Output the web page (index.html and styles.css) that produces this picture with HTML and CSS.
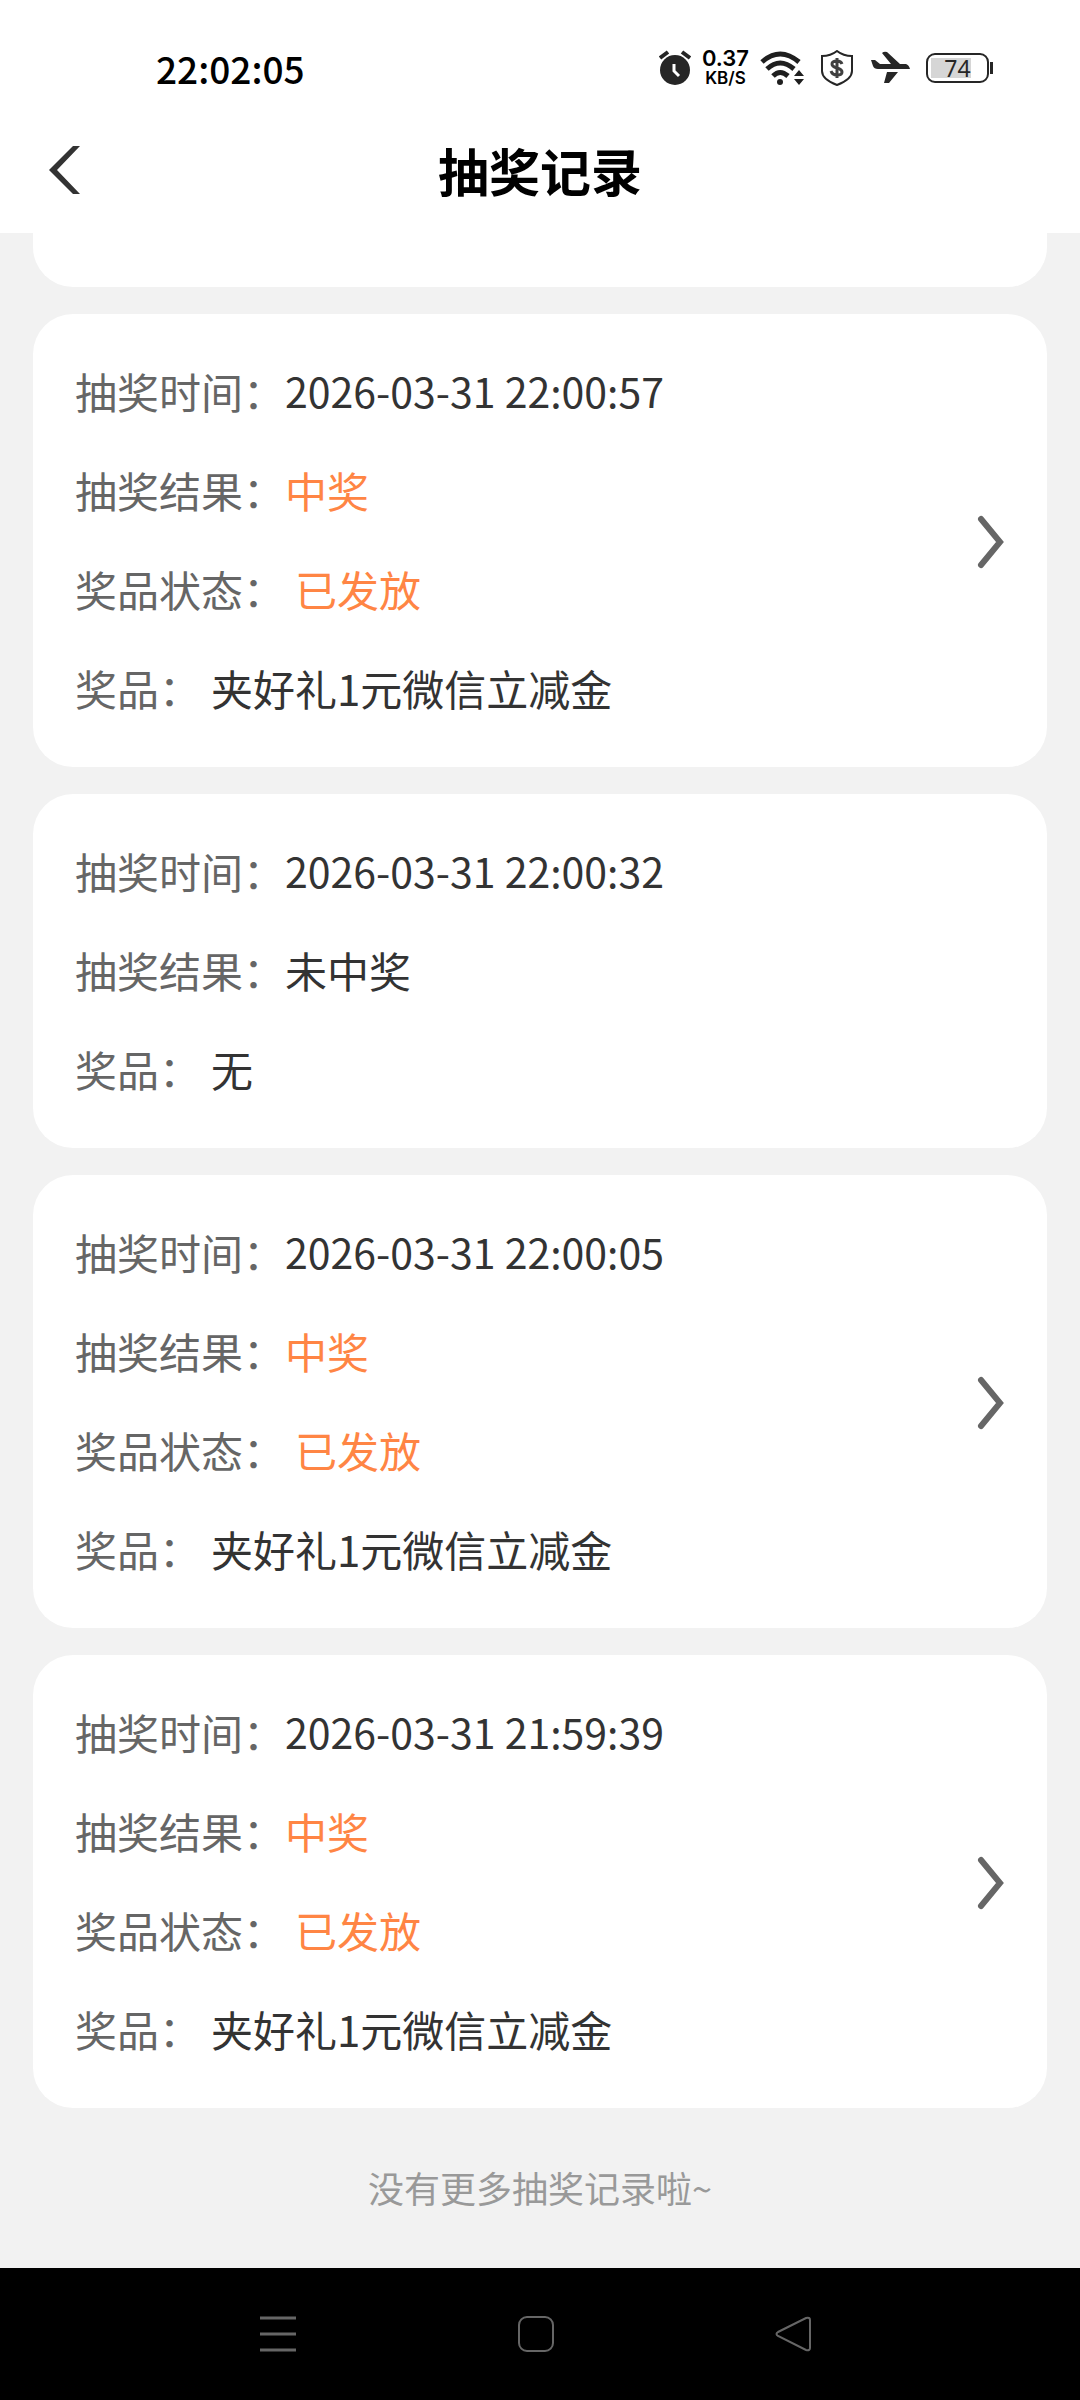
FILE: index.html
```html
<!DOCTYPE html>
<html lang="zh-CN">
<head>
<meta charset="utf-8">
<meta name="viewport" content="width=device-width, initial-scale=1">
<title>抽奖记录</title>
<link rel="stylesheet" href="styles.css">
</head>
<body>
<svg class="sprite" aria-hidden="true">
  <symbol id="chevron" viewBox="0 0 32 56">
    <path d="M7 6 26 29 7 52" fill="none" stroke="currentColor" stroke-width="6" stroke-linecap="round" stroke-linejoin="miter"/>
  </symbol>
</svg>

<div class="status">
  <time class="clock">22:02:05</time>
  <div class="indicators">
    <svg width="32" height="36" viewBox="0 0 32 36" aria-label="闹钟">
      <circle cx="16" cy="20" r="15" fill="#262626"/>
      <path d="M1 8 9 2M23 2l8 6" stroke="#262626" stroke-width="4" fill="none"/>
      <path d="M15 14v7l5 5" stroke="#fff" stroke-width="3" fill="none"/>
    </svg>
    <div class="speed"><span class="rate">0.37</span><span class="unit">KB/S</span></div>
    <svg width="44" height="36" viewBox="0 0 44 36" aria-label="无线网络">
      <g fill="none" stroke="#1f1f1f" stroke-width="5">
        <path d="M2 12Q20-4 39 12"/>
        <path d="M7 19Q20 7 34 19"/>
        <path d="M13 26Q20 19 28 26"/>
      </g>
      <circle cx="20" cy="32" r="3" fill="#1f1f1f"/>
      <path d="M34 26l5-6 5 6zM34 29h10l-5 6z" fill="#1f1f1f"/>
    </svg>
    <svg width="34" height="36" viewBox="0 0 34 36" aria-label="支付保护">
      <path d="M17 1C12 5 7 6 2 6v15c0 7 7 11 15 14 8-3 15-7 15-14V6C27 6 22 5 17 1z" fill="none" stroke="#262626" stroke-width="2"/>
      <path d="M22 14c-1-3-3-3-5-3-3 0-5 1-5 3 0 5 10 3 10 8 0 2-2 3-5 3s-5-1-6-4M17 8v20" fill="none" stroke="#404040" stroke-width="3"/>
    </svg>
    <svg width="40" height="34" viewBox="0 0 40 34" aria-label="飞行模式">
      <path d="M1 9h4l5 4h11L12 2q2-2 5-1l13 12h6q3 1 4 5H8q-4 0-5-3zM17 21h11L19 32h-5z" fill="#262626"/>
    </svg>
    <div class="battery"><span class="level">74</span></div>
  </div>
</div>

<header class="bar">
  <button class="back" type="button" aria-label="返回">
    <svg width="34" height="50" viewBox="0 0 34 50"><path d="M26 1h7L10 25l23 24h-7L2 25z" fill="#333"/></svg>
  </button>
  <h1 class="title">抽奖记录</h1>
</header>

<main class="records">
  <div class="card card-end"></div>

  <article class="card">
    <dl class="fields">
      <div class="row"><dt>抽奖时间：</dt><dd class="when">2026-03-31 22:00:57</dd></div>
      <div class="row"><dt>抽奖结果：</dt><dd class="won">中奖</dd></div>
      <div class="row spaced"><dt>奖品状态：</dt><dd class="won">已发放</dd></div>
      <div class="row spaced"><dt>奖品：</dt><dd>夹好礼1元微信立减金</dd></div>
    </dl>
    <a class="more" href="#" aria-label="查看详情"><svg width="32" height="56"><use href="#chevron"/></svg></a>
  </article>

  <article class="card">
    <dl class="fields">
      <div class="row"><dt>抽奖时间：</dt><dd class="when">2026-03-31 22:00:32</dd></div>
      <div class="row"><dt>抽奖结果：</dt><dd>未中奖</dd></div>
      <div class="row spaced"><dt>奖品：</dt><dd>无</dd></div>
    </dl>
  </article>

  <article class="card">
    <dl class="fields">
      <div class="row"><dt>抽奖时间：</dt><dd class="when">2026-03-31 22:00:05</dd></div>
      <div class="row"><dt>抽奖结果：</dt><dd class="won">中奖</dd></div>
      <div class="row spaced"><dt>奖品状态：</dt><dd class="won">已发放</dd></div>
      <div class="row spaced"><dt>奖品：</dt><dd>夹好礼1元微信立减金</dd></div>
    </dl>
    <a class="more" href="#" aria-label="查看详情"><svg width="32" height="56"><use href="#chevron"/></svg></a>
  </article>

  <article class="card">
    <dl class="fields">
      <div class="row"><dt>抽奖时间：</dt><dd class="when">2026-03-31 21:59:39</dd></div>
      <div class="row"><dt>抽奖结果：</dt><dd class="won">中奖</dd></div>
      <div class="row spaced"><dt>奖品状态：</dt><dd class="won">已发放</dd></div>
      <div class="row spaced"><dt>奖品：</dt><dd>夹好礼1元微信立减金</dd></div>
    </dl>
    <a class="more" href="#" aria-label="查看详情"><svg width="32" height="56"><use href="#chevron"/></svg></a>
  </article>
</main>

<p class="end">没有更多抽奖记录啦~</p>

<nav class="system">
  <button type="button" aria-label="最近任务">
    <svg width="40" height="40" viewBox="0 0 40 40"><path d="M2 4h36M2 20h36M2 36h36" stroke="#666" stroke-width="3"/></svg>
  </button>
  <button type="button" aria-label="主屏幕">
    <svg width="40" height="40" viewBox="0 0 40 40"><rect x="3" y="3" width="34" height="34" rx="8" fill="none" stroke="#666" stroke-width="2"/></svg>
  </button>
  <button type="button" aria-label="返回">
    <svg width="40" height="40" viewBox="0 0 40 40"><path d="M4 18 32 4q4-1 4 2v28q0 3-4 2L4 22q-3-2 0-4z" fill="none" stroke="#666" stroke-width="2"/></svg>
  </button>
</nav>
</body>
</html>
```
FILE: styles.css
```css
* {
  box-sizing: border-box;
}

body {
  display: flex;
  flex-direction: column;
  min-height: 100vh;
  margin: 0;
  background: #f2f2f2;
  color: #333;
  font-family: "Noto Sans CJK SC", sans-serif;
  font-size: 42px;
}

button {
  display: flex;
  align-items: center;
  justify-content: center;
  padding: 0;
  border: 0;
  background: none;
}

svg {
  display: block;
  flex: none;
}

.sprite {
  position: absolute;
  width: 0;
  height: 0;
}

/* System status bar */
.status {
  display: flex;
  align-items: center;
  justify-content: space-between;
  padding: 28px 87px 0 156px;
  background: #fff;
  color: #000;
}

.clock {
  font-size: 37px;
  font-weight: 500;
  line-height: 80px;
}

.indicators {
  display: flex;
  align-items: center;
  gap: 16px;
}

.speed {
  display: flex;
  flex-direction: column;
  align-items: center;
  margin: 0 -5px;
  font-family: Inter, sans-serif;
  font-weight: 600;
}

.rate {
  font-size: 22px;
  line-height: 20px;
}

.unit {
  font-size: 17px;
  line-height: 20px;
}

.battery {
  display: flex;
  align-items: center;
}

.battery::after {
  width: 3px;
  height: 12px;
  margin-left: 1px;
  background: #262626;
  content: "";
}

.level {
  width: 63px;
  border: 2px solid #262626;
  border-radius: 9px;
  background: linear-gradient(#d6d6d6, #d6d6d6) 3px 3px / 40px 20px no-repeat;
  color: #262626;
  font-family: "Noto Sans", sans-serif;
  font-size: 23px;
  line-height: 26px;
  text-align: center;
}

/* Page header */
.bar {
  display: grid;
  grid-template-columns: 128px 1fr 128px;
  align-items: center;
  padding-bottom: 1px;
  background: #fff;
}

.back {
  height: 80px;
}

.title {
  margin: 0;
  color: #000;
  font-size: 51px;
  font-weight: 700;
  line-height: 124px;
  text-align: center;
}

/* Record cards */
.records {
  display: flex;
  flex-direction: column;
  gap: 27px;
  padding: 0 33px;
}

.card {
  display: flex;
  align-items: center;
  justify-content: space-between;
  padding: 27px 41px 30px 42px;
  border-radius: 40px;
  background: #fff;
}

.card-end {
  padding: 27px;
  border-radius: 0 0 40px 40px;
}

.fields {
  margin: 0;
}

.row {
  display: flex;
  line-height: 99px;
}

.spaced {
  gap: 10px;
}

dt {
  color: #666;
}

dd {
  margin: 0;
}

.when {
  font-size: 41px;
}

.won {
  color: #ff8544;
}

.more {
  padding-top: 4px;
  color: #666;
}

.end {
  margin: 0;
  padding-bottom: 2px;
  color: #999;
  font-size: 36px;
  line-height: 158px;
  text-align: center;
}

/* System navigation */
.system {
  display: flex;
  margin-top: auto;
  padding: 0 157px 0 149px;
  background: #000;
}

.system button {
  flex: 1;
  height: 132px;
}
```
